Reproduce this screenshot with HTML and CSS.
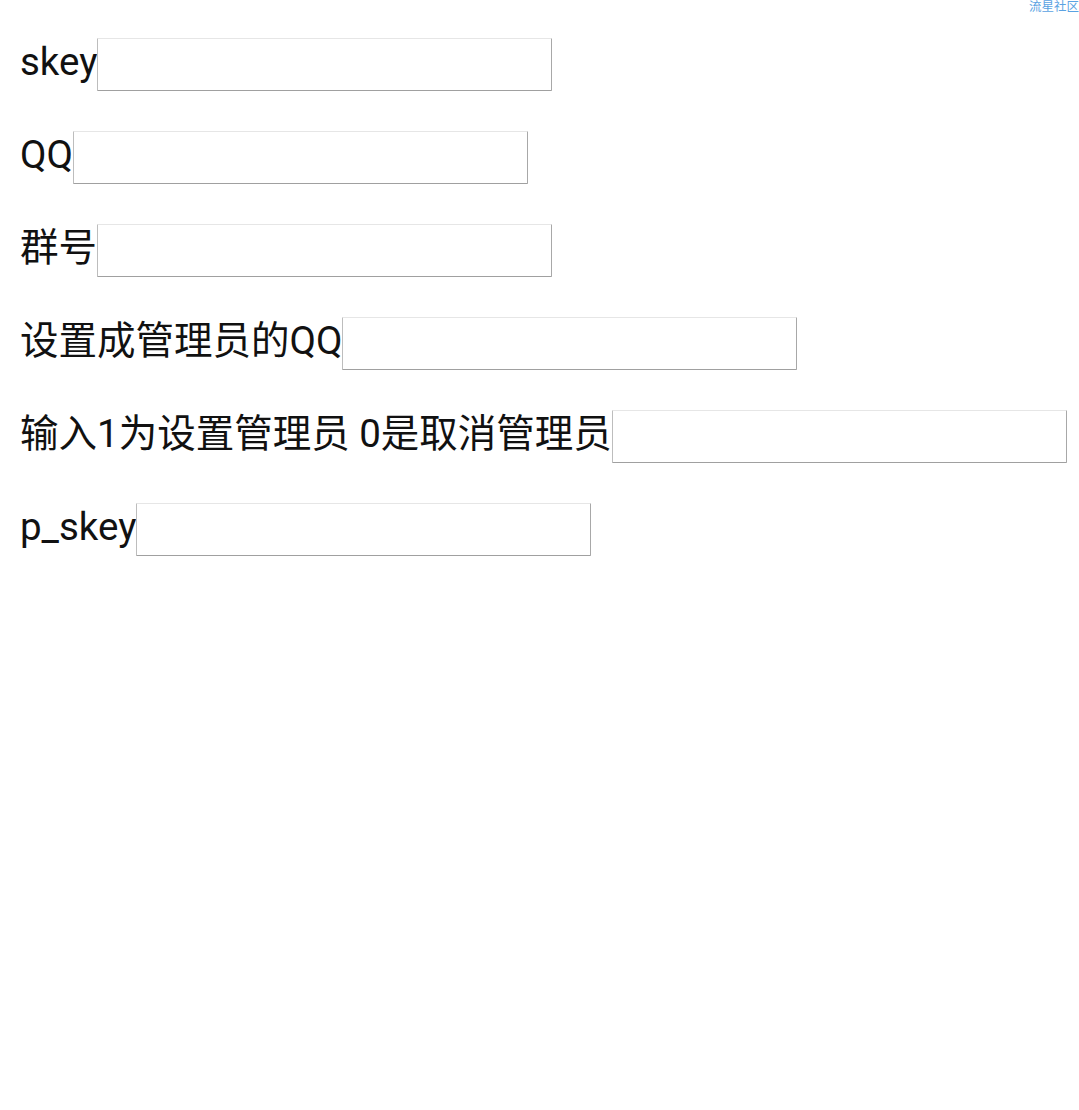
FILE: index.html
```html
<!DOCTYPE html>
<html lang="zh-CN">
<head>
<meta charset="utf-8">
<title>设置管理员</title>
<link rel="stylesheet" href="styles.css">
</head>
<body>
<div class="topbar"><a class="site-link" href="#">流星社区</a></div>
<form class="form">
  <div class="row"><span class="label">skey</span><input class="field" type="text"></div>
  <div class="row"><span class="label">QQ</span><input class="field" type="text"></div>
  <div class="row"><span class="label">群号</span><input class="field" type="text"></div>
  <div class="row"><span class="label">设置成管理员的QQ</span><input class="field" type="text"></div>
  <div class="row"><span class="label">输入1为设置管理员 0是取消管理员</span><input class="field" type="text"></div>
  <div class="row"><span class="label">p_skey</span><input class="field" type="text"></div>
</form>
</body>
</html>
```
FILE: styles.css
```css
html, body {
  margin: 0;
  padding: 0;
  background: #ffffff;
}
body {
  font-family: Roboto, "Noto Sans CJK SC", sans-serif;
  color: #111111;
}
.topbar {
  height: 0;
  display: flex;
  justify-content: flex-end;
}
.site-link {
  font-size: 12.5px;
  line-height: 13px;
  color: #5aa2e2;
  text-decoration: none;
  white-space: nowrap;
}
.form {
  padding: 38px 0 0 20px;
  display: flex;
  flex-direction: column;
  gap: 40px;
}
.row {
  display: flex;
  align-items: flex-end;
  height: 53px;
}
.label {
  font-size: 38.5px;
  line-height: 38px;
  height: 38px;
  margin-bottom: 10px;
  white-space: nowrap;
}
.field {
  box-sizing: border-box;
  width: 455px;
  height: 53px;
  margin: 0;
  padding: 0 4px;
  background: #ffffff;
  border-style: solid;
  border-width: 1px;
  border-color: #e6e6e6 #a8a8a8 #a0a0a0 #bdbdbd;
  border-radius: 1px;
  outline: none;
}
```
